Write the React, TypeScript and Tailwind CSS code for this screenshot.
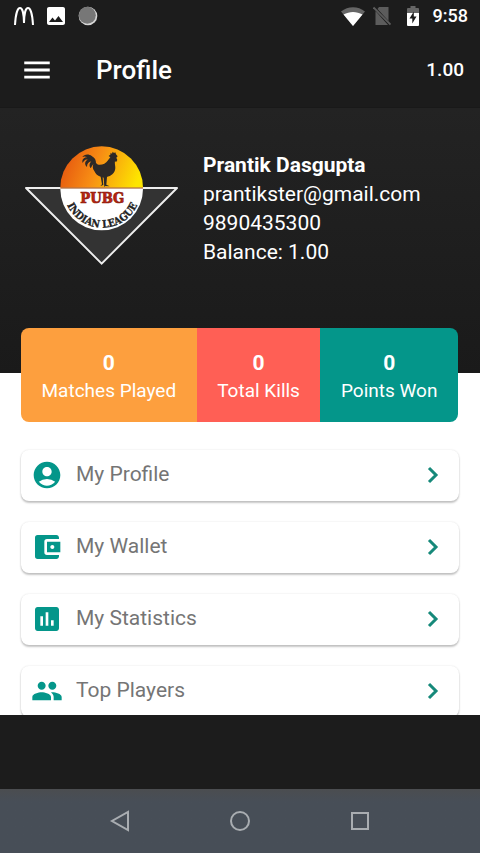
import React from 'react';
import {
  MdAccountBalanceWallet,
  MdAccountCircle,
  MdAssessment,
  MdImage,
  MdMenu,
  MdPeople,
} from 'react-icons/md';

const stats = [
  { label: 'Matches Played', value: 0, color: 'bg-[#fd9f3e]' },
  { label: 'Total Kills', value: 0, color: 'bg-[#ff5f55]' },
  { label: 'Points Won', value: 0, color: 'bg-[#04968a]' },
];

const links = [
  { label: 'My Profile', icon: MdAccountCircle },
  { label: 'My Wallet', icon: MdAccountBalanceWallet },
  { label: 'My Statistics', icon: MdAssessment },
  { label: 'Top Players', icon: MdPeople },
];

const StatusBar: React.FC = () => (
  <div className="flex h-8 shrink-0 items-center justify-between pl-3.5 pr-3 text-white">
    <div className="flex items-center">
      <svg viewBox="0 0 20 18" className="h-[18px] w-5" fill="none" stroke="currentColor" strokeWidth="2">
        <path d="M1 18C1.500 8 3.500 1 6 1C8.500 1 10 8 10 16C10 8 11.500 1 14 1C16.500 1 18.500 8 19 18" />
      </svg>
      <MdImage className="ml-2.5 size-6" />
      <svg viewBox="0 0 20 20" className="ml-2.5 size-5">
        <circle cx="10" cy="10" r="9.300" fill="#d6d6d6" />
        <circle cx="9.300" cy="9.200" r="8.500" fill="#777" />
      </svg>
    </div>
    <div className="flex items-center">
      <svg viewBox="0 0 24 19" className="h-[19px] w-6">
        <path d="M12 19L0 4.500C7-1.200 17-1.200 24 4.500Z" fill="#666" />
        <path d="M12 19L2.500 7.500C8.500 4 15.500 4 21.500 7.500Z" fill="#fff" />
      </svg>
      <svg viewBox="0 0 18 20" className="ml-2 h-5 w-[18px]">
        <path d="M6 1H15.500V15L4.500 3ZM2.500 5L15 19H2.500Z" fill="#5c5c5c" />
        <path d="M0.500 1.500L17.500 18.500" stroke="#5c5c5c" strokeWidth="1.800" />
      </svg>
      <svg viewBox="0 0 12 20" className="ml-4 h-5 w-3">
        <path d="M3.500 0H8.500V2H11Q12 2 12 3V8H0V3Q0 2 1 2H3.500Z" fill="#666" />
        <path d="M0 7H12V19Q12 20 11 20H1Q0 20 0 19Z" fill="#fff" />
        <path d="M6.800 5.500L2.500 12.500H5.300V17.500L9.500 10.500H6.800Z" fill="#1c1c1c" />
      </svg>
      <span className="ml-3.5 text-lg font-medium">9:58</span>
    </div>
  </div>
);

const Logo: React.FC = () => (
  <svg viewBox="27 30 465 363" className="h-[121px] w-[155px] shrink-0" role="img" aria-label="PUBG Indian League">
    <defs>
      <linearGradient id="sun" x1="0" y1="0.300" x2="1" y2="0.500">
        <stop offset="0" stopColor="#e4520f" />
        <stop offset="0.450" stopColor="#f78d14" />
        <stop offset="1" stopColor="#fde500" />
      </linearGradient>
      <path id="arc" d="M146 162A116 116 0 0 0 378 162" />
    </defs>
    <path d="M33 159H486L260 386Z" fill="#333" stroke="#eee" strokeWidth="6" strokeLinejoin="round" />
    <path d="M136 158A124 124 0 0 1 384 158Z" fill="url(#sun)" />
    <path d="M136 162A124 124 0 0 0 384 162Z" fill="#fff" />
    <path d="M136 159H384" stroke="#a8541c" strokeWidth="3" />
    <path
      d="M293 50L297 54L301 52L303 58L308 64L304 68L307 75L303 82L300 78C298 90 304 97 299 108C295 119 284 123 276 126L274 149L284 154L271 153L268 156L266 128L263 127L265 150L256 153L261 148L257 125C247 122 241 116 238 108C232 101 233 94 235 87C230 93 229 99 226 99C221 90 225 83 229 79C220 81 216 87 216 96C207 88 210 77 218 74C210 72 206 79 203 84C199 74 208 66 217 67C210 62 205 65 202 66C207 57 222 56 230 63C240 68 243 76 243 84C249 92 259 90 268 86C277 81 281 72 286 67L281 63L287 58L286 53L291 56Z"
      fill="#2d2927"
    />
    <text
      x="262"
      y="203"
      textAnchor="middle"
      fill="#bd2412"
      stroke="#8a1c0e"
      strokeWidth="2"
      className="font-['DejaVu_Serif_Condensed','DejaVu_Serif',serif] text-[44px] font-bold"
    >
      PUBG
    </text>
    <text
      fill="#222"
      stroke="#222"
      strokeWidth="1"
      className="font-['DejaVu_Serif_Condensed','DejaVu_Serif',serif] text-[31px] font-bold"
    >
      <textPath href="#arc" startOffset="50%" textAnchor="middle">
        INDIAN LEAGUE
      </textPath>
    </text>
  </svg>
);

const App: React.FC = () => {
  return (
    <div className="flex h-screen flex-col bg-[#1c1c1c] font-['Roboto',sans-serif]">
      <StatusBar />
      <header className="flex h-[76px] shrink-0 items-center border-b border-[#191919] px-4 text-white">
        <button type="button" aria-label="Menu" className="ml-1">
          <MdMenu className="size-[34px]" />
        </button>
        <h1 className="ml-[42px] flex-1 pt-0.5 text-[26px] font-medium">Profile</h1>
        <span className="pt-0.5 text-[19px] font-medium">1.00</span>
      </header>

      <main className="min-h-0 flex-1 overflow-y-auto bg-white [scrollbar-width:none]">
        <section className="flex h-[265px] items-start bg-linear-to-b from-[#232323] to-[#1a1a1a] px-6 pt-[37px] text-white">
          <Logo />
          <div className="ml-6 mt-1.5 text-[21px] leading-[29px]">
            <p className="font-bold">Prantik Dasgupta</p>
            <p>prantikster@gmail.com</p>
            <p>9890435300</p>
            <p>Balance: 1.00</p>
          </div>
        </section>

        <section className="relative ml-[21px] mr-[22px] -mt-[45px] flex overflow-hidden rounded-lg text-center text-white">
          {stats.map((s) => (
            <div key={s.label} className={`flex-auto pb-[18px] pt-[22px] ${s.color}`}>
              <p className="text-[21px] font-bold leading-[27px]">{s.value}</p>
              <p className="text-[19px] leading-[27px]">{s.label}</p>
            </div>
          ))}
        </section>

        <nav className="mt-7 flex flex-col gap-[21px] px-[21px] pb-7">
          {links.map(({ label, icon: Icon }) => (
            <button
              key={label}
              type="button"
              className="flex h-[51px] shrink-0 items-center rounded-lg bg-white pb-px pl-2.5 pr-2.5 text-[#757575] shadow-[0_2px_2px_rgba(0,0,0,0.22),0_0_2px_rgba(0,0,0,0.12)]"
            >
              <Icon className="size-8 text-[#04968a]" />
              <span className="ml-[13px] flex-1 text-left text-[21px]">{label}</span>
              <svg viewBox="0 0 32 32" className="size-8" fill="none" stroke="#16897a" strokeWidth="3">
                <path d="M12 9L19 16L12 23" />
              </svg>
            </button>
          ))}
        </nav>
      </main>

      <div className="h-[74px] shrink-0" />
      <footer className="flex h-16 shrink-0 items-center justify-center gap-24 bg-linear-to-b from-[#4b4d50] to-[#474e57] to-20% text-[#a9adb1]">
        <button type="button" aria-label="Back">
          <svg viewBox="0 0 24 24" className="size-6" fill="none" stroke="currentColor" strokeWidth="2">
            <path d="M20 3V21L4 12Z" />
          </svg>
        </button>
        <button type="button" aria-label="Home">
          <svg viewBox="0 0 24 24" className="size-6" fill="none" stroke="currentColor" strokeWidth="2">
            <circle cx="12" cy="12" r="9" />
          </svg>
        </button>
        <button type="button" aria-label="Recent apps">
          <svg viewBox="0 0 24 24" className="size-6" fill="none" stroke="currentColor" strokeWidth="2">
            <rect x="4" y="4" width="16" height="16" />
          </svg>
        </button>
      </footer>
    </div>
  );
};

export default App;
